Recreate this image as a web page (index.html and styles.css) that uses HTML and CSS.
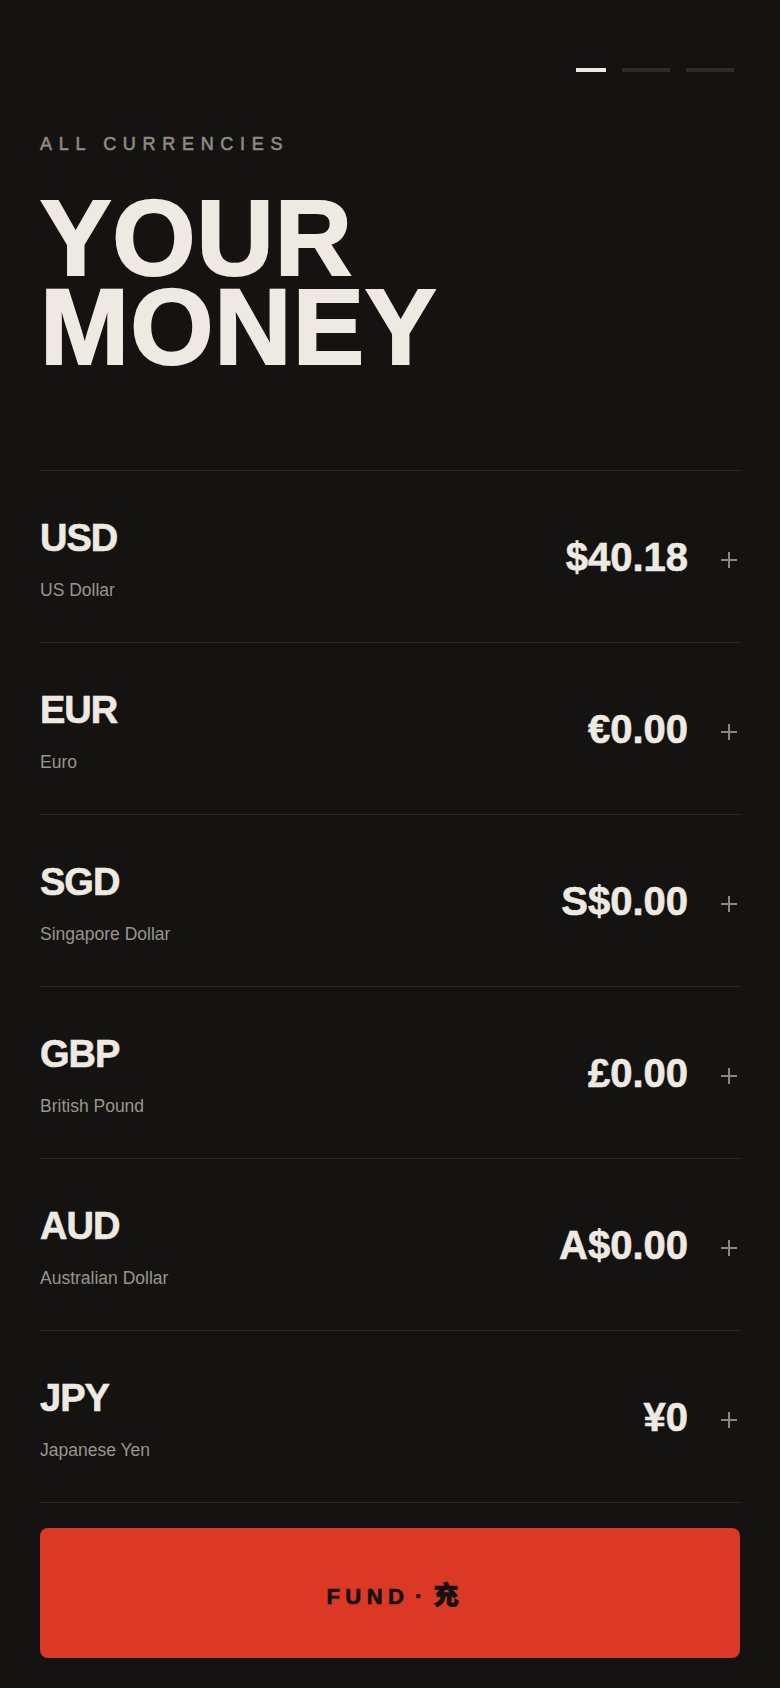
FILE: index.html
```html
<!DOCTYPE html>
<html lang="en">
<head>
    <meta charset="UTF-8">
    <title>Your Money</title>
    <link rel="stylesheet" href="styles.css">
</head>
<body>

<main class="screen">
    <header class="top">
        <div class="pager">
            <span class="step active"></span>
            <span class="step"></span>
            <span class="step"></span>
        </div>
        <p class="eyebrow">ALL CURRENCIES</p>
        <h1 class="title"><span class="line">YOUR</span><span class="line">MONEY</span></h1>
    </header>

    <ul class="wallets">
        <li class="wallet">
            <div class="info">
                <div class="code">USD</div>
                <div class="name">US Dollar</div>
            </div>
            <div class="balance">$40.18</div>
            <button class="add" aria-label="Add USD">
                <svg viewBox="0 0 20 20" width="20" height="20"><path d="M10 2v16M2 10h16" stroke="currentColor" stroke-width="2" fill="none"/></svg>
            </button>
        </li>
        <li class="wallet">
            <div class="info">
                <div class="code">EUR</div>
                <div class="name">Euro</div>
            </div>
            <div class="balance">€0.00</div>
            <button class="add" aria-label="Add EUR">
                <svg viewBox="0 0 20 20" width="20" height="20"><path d="M10 2v16M2 10h16" stroke="currentColor" stroke-width="2" fill="none"/></svg>
            </button>
        </li>
        <li class="wallet">
            <div class="info">
                <div class="code">SGD</div>
                <div class="name">Singapore Dollar</div>
            </div>
            <div class="balance">S$0.00</div>
            <button class="add" aria-label="Add SGD">
                <svg viewBox="0 0 20 20" width="20" height="20"><path d="M10 2v16M2 10h16" stroke="currentColor" stroke-width="2" fill="none"/></svg>
            </button>
        </li>
        <li class="wallet">
            <div class="info">
                <div class="code">GBP</div>
                <div class="name">British Pound</div>
            </div>
            <div class="balance">£0.00</div>
            <button class="add" aria-label="Add GBP">
                <svg viewBox="0 0 20 20" width="20" height="20"><path d="M10 2v16M2 10h16" stroke="currentColor" stroke-width="2" fill="none"/></svg>
            </button>
        </li>
        <li class="wallet">
            <div class="info">
                <div class="code">AUD</div>
                <div class="name">Australian Dollar</div>
            </div>
            <div class="balance">A$0.00</div>
            <button class="add" aria-label="Add AUD">
                <svg viewBox="0 0 20 20" width="20" height="20"><path d="M10 2v16M2 10h16" stroke="currentColor" stroke-width="2" fill="none"/></svg>
            </button>
        </li>
        <li class="wallet">
            <div class="info">
                <div class="code">JPY</div>
                <div class="name">Japanese Yen</div>
            </div>
            <div class="balance">¥0</div>
            <button class="add" aria-label="Add JPY">
                <svg viewBox="0 0 20 20" width="20" height="20"><path d="M10 2v16M2 10h16" stroke="currentColor" stroke-width="2" fill="none"/></svg>
            </button>
        </li>
    </ul>

    <button class="fund">FUND · <span class="cjk">充</span></button>
</main>

</body>
</html>
```

FILE: styles.css
```css
html, body {
    margin: 0;
    background-color: #141311;
}
body {
    font-family: 'Liberation Sans', Arial, 'Noto Sans CJK SC', sans-serif;
    color: #eeeae2;
}
.screen {
    box-sizing: border-box;
    min-height: 1688px;
    padding: 0 40px 30px;
}
.pager {
    display: flex;
    justify-content: flex-end;
    gap: 16px;
    padding-top: 68px;
    margin-right: 6px;
}
.step {
    width: 48px;
    height: 4px;
    background: #2d2a28;
}
.step.active {
    width: 30px;
    background: #efebe3;
}
.eyebrow {
    margin: 63px 0 0;
    font-size: 18px;
    line-height: 18px;
    letter-spacing: 6.7px;
    color: #8f8a83;
    -webkit-text-stroke: 0.6px #8f8a83;
}
.title {
    margin: 41px 0 0;
    font-size: 107px;
    font-weight: bold;
    letter-spacing: 1px;
    -webkit-text-stroke: 2px #eeeae2;
}
.title .line {
    display: block;
    height: 88.5px;
    line-height: 88.5px;
}
.wallets {
    list-style: none;
    margin: 99px 0 0;
    padding: 0;
    border-bottom: 1px solid #2b2927;
}
.wallet {
    display: flex;
    align-items: center;
    padding: 48px 0 42px;
    border-top: 1px solid #2b2927;
}
.info {
    flex: 1;
}
.code {
    font-size: 38px;
    line-height: 38px;
    font-weight: bold;
    letter-spacing: -1px;
    -webkit-text-stroke: 0.6px #eeeae2;
}
.name {
    margin-top: 23px;
    font-size: 17.5px;
    line-height: 20px;
    color: #9a958e;
}
.balance {
    margin-bottom: 6px;
    font-size: 40px;
    line-height: 40px;
    font-weight: bold;
    letter-spacing: 0;
    -webkit-text-stroke: 0.6px #eeeae2;
}
.add {
    display: block;
    width: 20px;
    height: 20px;
    margin: 0 1px 0 31px;
    padding: 0;
    border: none;
    background: none;
    color: #8a867f;
    cursor: pointer;
}
.add svg {
    display: block;
}
.fund {
    display: block;
    width: 100%;
    height: 130px;
    margin-top: 25px;
    padding: 0 0 0 5px;
    border: none;
    border-radius: 8px;
    background-color: #dc3826;
    color: #141210;
    font-family: 'Liberation Sans', Arial, 'Noto Sans CJK SC', sans-serif;
    font-size: 22px;
    font-weight: bold;
    letter-spacing: 5.5px;
    word-spacing: -6px;
    -webkit-text-stroke: 0.7px #141210;
    cursor: pointer;
}
.fund .cjk {
    font-family: 'Noto Sans CJK SC', sans-serif;
    font-size: 25px;
    font-weight: 900;
    letter-spacing: 0;
}
```
